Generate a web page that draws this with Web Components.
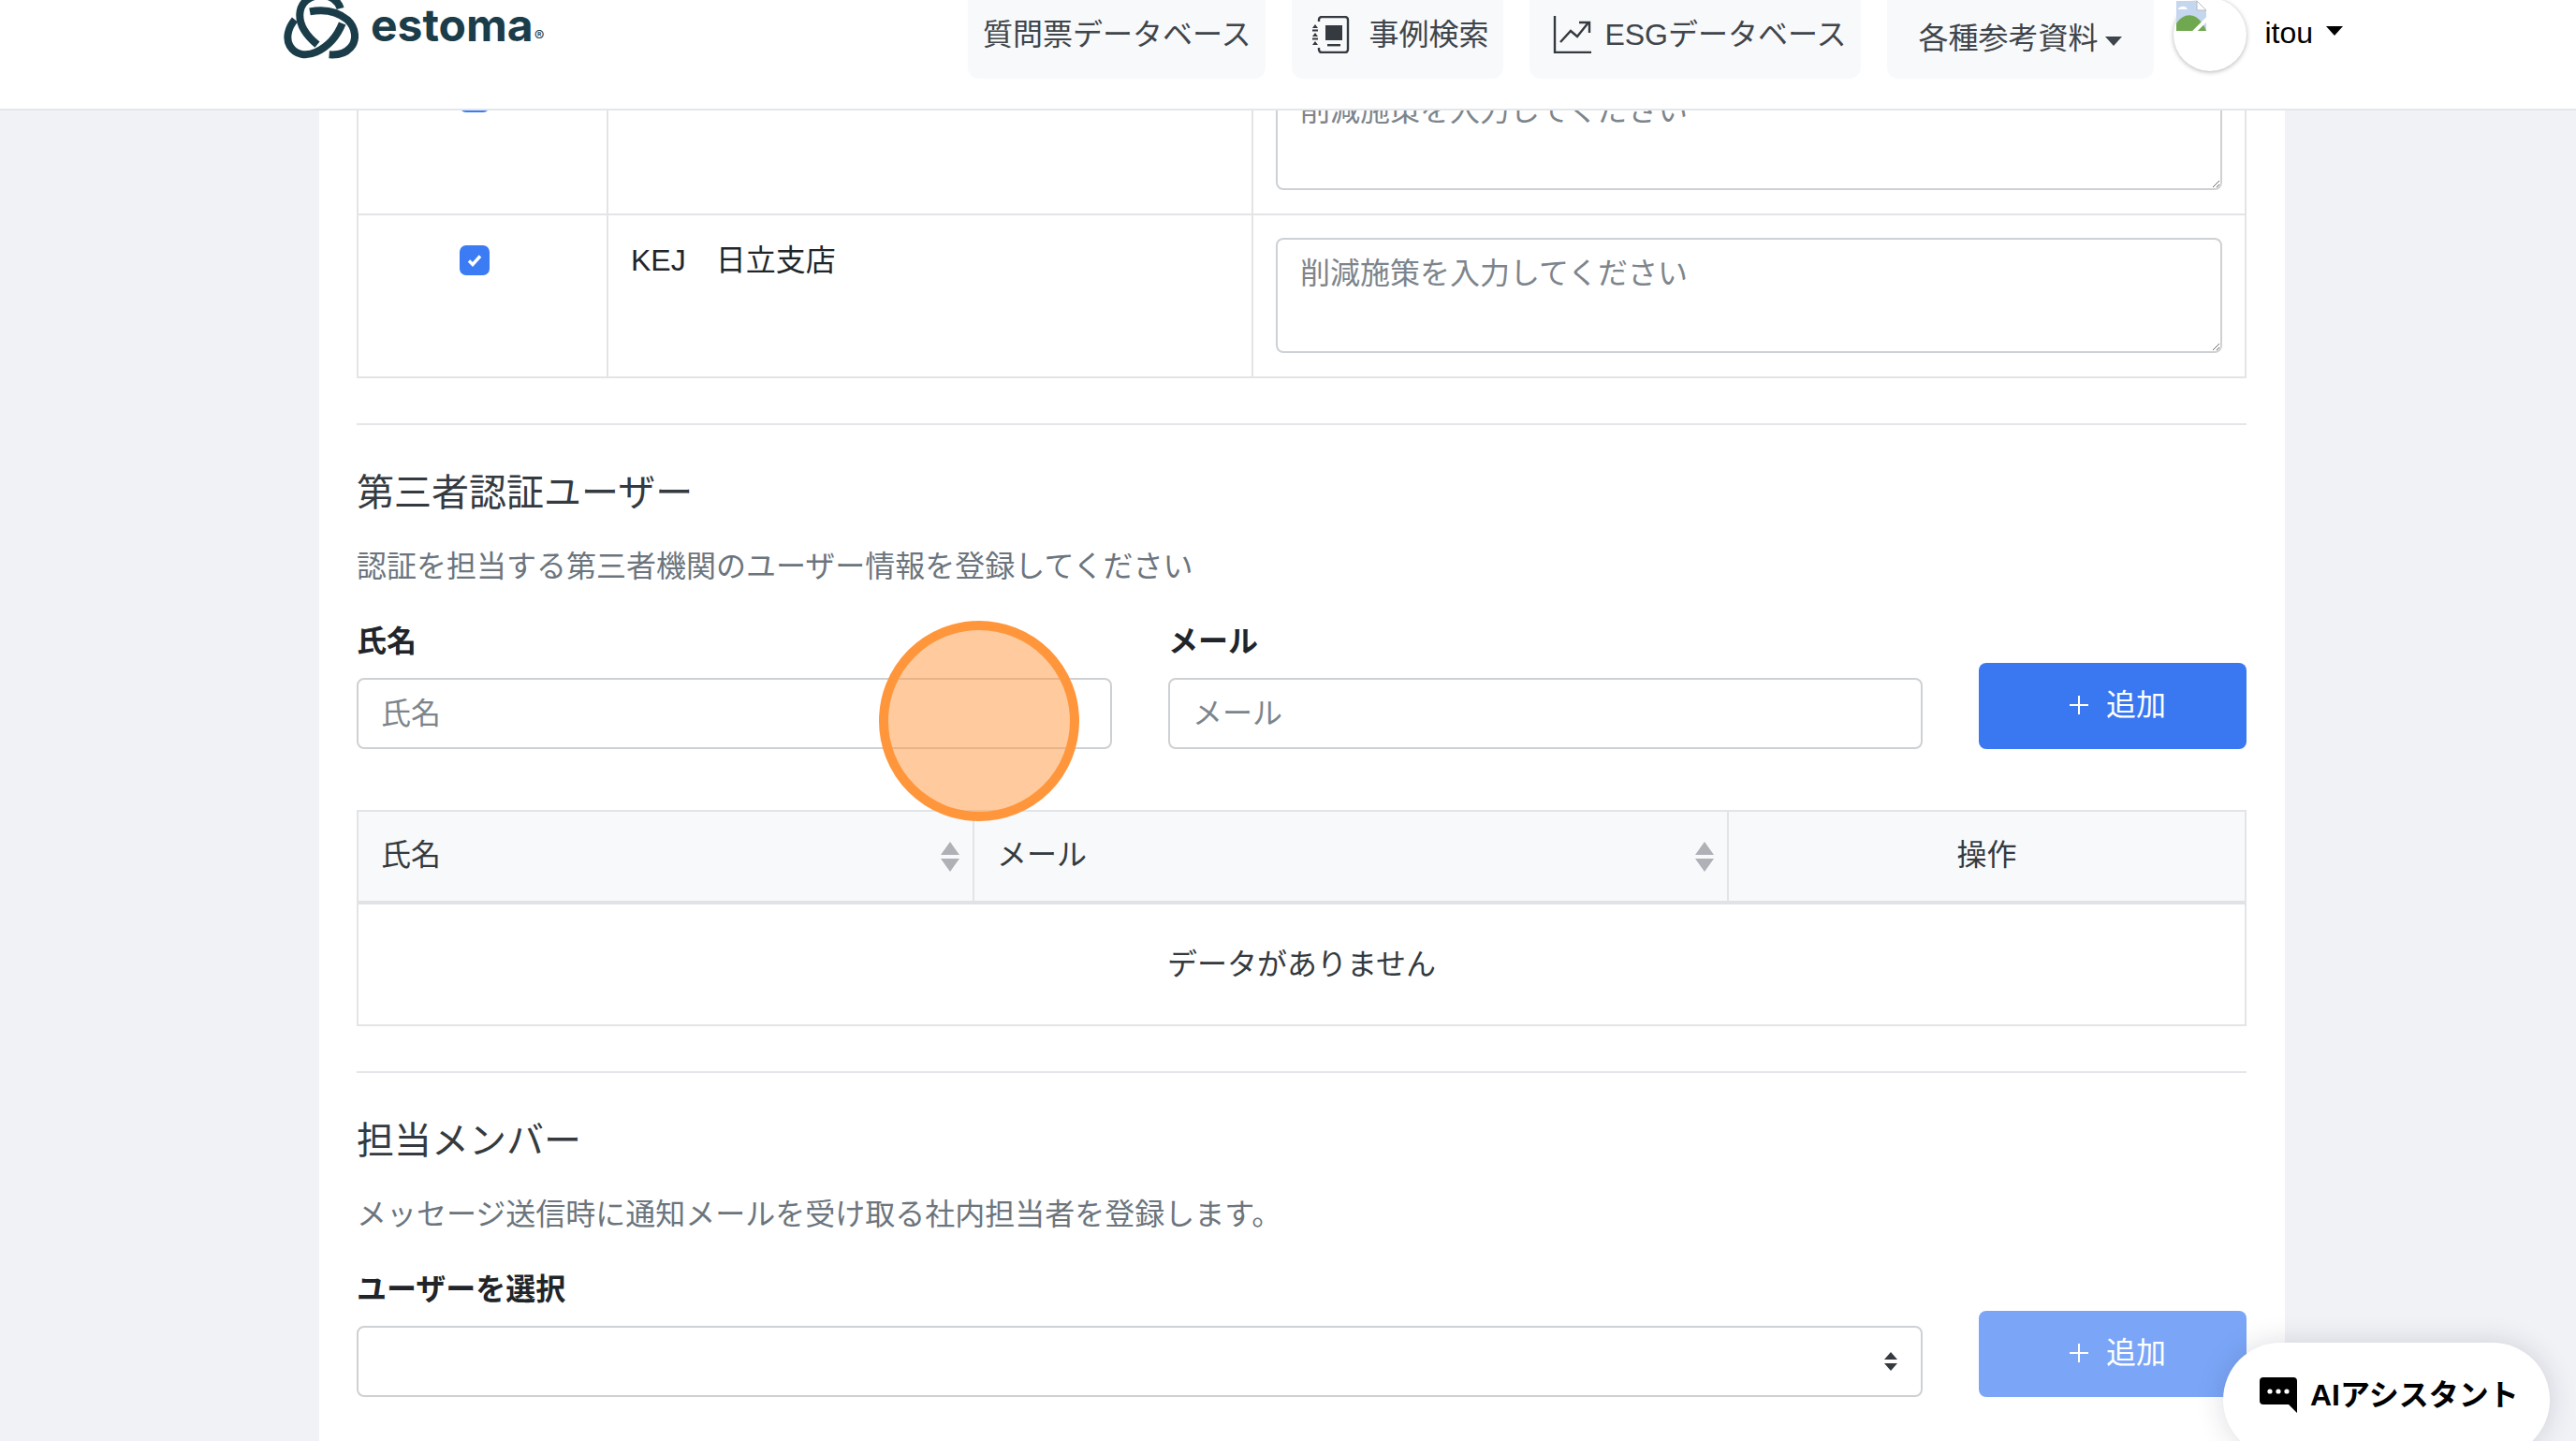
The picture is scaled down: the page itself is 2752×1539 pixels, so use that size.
<!DOCTYPE html>
<html lang="ja">
<head>
<meta charset="utf-8">
<title>estoma</title>
<style>
	html, body { margin: 0; height: 1539px; overflow: hidden; }
	body {
		background: #f1f2f6;
		font-family: "Liberation Sans", "Noto Sans CJK JP", sans-serif;
		font-size: 32px;
		line-height: 48px;
		color: #212529;
		position: relative;
	}
</style>
</head>
<body>
	<app-header>
		<nav-item>質問票データベース</nav-item>
		<nav-item icon="book">事例検索</nav-item>
		<nav-item icon="chart">ESGデータベース</nav-item>
		<nav-item caret low>各種参考資料</nav-item>
		<user-menu>itou</user-menu>
	</app-header>

	<page-card>
		<branch-table>
			<branch-row></branch-row>
			<branch-row>KEJ　日立支店</branch-row>
		</branch-table>

		<settings-section heading="第三者認証ユーザー" desc="認証を担当する第三者機関のユーザー情報を登録してください">
			<form-row>
				<form-field label="氏名" placeholder="氏名"></form-field>
				<form-field label="メール" placeholder="メール"></form-field>
				<add-button></add-button>
			</form-row>
			<user-table></user-table>
		</settings-section>

		<settings-section heading="担当メンバー" desc="メッセージ送信時に通知メールを受け取る社内担当者を登録します。">
			<form-row>
				<form-field label="ユーザーを選択" select></form-field>
				<add-button disabled></add-button>
			</form-row>
		</settings-section>
	</page-card>

	<click-marker></click-marker>
	<chat-pill>AIアシスタント</chat-pill>

<script>
const ICONS = {
	book: `<svg width="48" height="40" viewBox="0 0 48 40" fill="none">
		<path d="M13 6V4a3 3 0 0 1 3-3h25a3 3 0 0 1 3 3v32a3 3 0 0 1-3 3H16a3 3 0 0 1-3-3v-2" stroke="#343a40" stroke-width="2.4"/>
		<rect x="20" y="10" width="18" height="16" fill="#343a40"/>
		<rect x="22" y="30" width="14" height="2.4" fill="#343a40"/>
		<path d="M9 9l3 4H6zM9 18l3 4H6zM9 27l3 4H6z" fill="#343a40"/>
		<rect x="6" y="14.5" width="6" height="2" fill="#343a40"/>
		<rect x="6" y="23.5" width="6" height="2" fill="#343a40"/>
	</svg>`,
	chart: `<svg width="56" height="40" viewBox="0 0 56 40" fill="none" stroke="#343a40" stroke-width="2.4">
		<path d="M11 0v39h39"/>
		<path d="M17 28l11-12 7 6 12-15"/>
		<path d="M37 7h11v11"/>
	</svg>`,
};

class AppHeader extends HTMLElement {
	constructor() {
		super();
		this.attachShadow({ mode: 'open' });
	}

	connectedCallback() {
		this.shadowRoot.innerHTML = /*html*/ `
		<style>
			:host {
				display: flex;
				align-items: flex-end;
				box-sizing: border-box;
				height: 118px;
				padding: 0 0 32px 303px;
				background: #fff;
				border-bottom: 2px solid #e4e6e9;
				overflow: hidden;
				position: relative;
				z-index: 2;
			}
			.logo {
				flex: 0 0 731px;
				display: flex;
				align-items: flex-end;
				margin-bottom: 21px;
				color: #1b3d4a;
			}
			.logo svg { display: block; flex: none; }
			.word {
				font-family: Inter, "Liberation Sans", sans-serif;
				font-weight: 700;
				font-size: 48px;
				line-height: 48px;
				margin: 0 0 12px 13px;
			}
			.word sup {
				font-size: 16px;
				font-weight: 400;
				line-height: 0;
				vertical-align: baseline;
				margin-left: 1px;
			}
			.nav { display: flex; align-items: flex-end; gap: 28px; }
		</style>
		<div class="logo">
			<svg width="80" height="64" viewBox="0 0 240 192" fill="none" stroke="#1b3d4a" stroke-width="24">
				<path d="M108 146C74 118 50 84 52 48C54 12 82 -12 122 -12C152 -12 176 8 182 30"/>
				<path d="M84 40C126 32 170 38 204 66C232 92 236 132 214 156C198 174 172 180 146 178"/>
				<path d="M36 66C14 92 6 126 20 150C38 180 72 184 104 170C142 152 172 118 188 78"/>
			</svg>
			<div class="word">estoma<sup>®</sup></div>
		</div>
		<div class="nav"><slot></slot></div>
		`;
	}
}

class NavItem extends HTMLElement {
	constructor() {
		super();
		this.attachShadow({ mode: 'open' });
	}

	connectedCallback() {
		const icon = this.getAttribute('icon');
		const caret = this.hasAttribute('caret');
		this.shadowRoot.innerHTML = /*html*/ `
		<style>
			:host {
				display: flex;
				align-items: flex-end;
				box-sizing: border-box;
				height: 110px;
				padding: 0 16px 23px;
				background: #f8f9fa;
				border-radius: 0 0 12px 12px;
				color: #3f454b;
				white-space: nowrap;
			}
			:host([low]) { padding: 0 34px 19px 33px; }
			.in { display: flex; align-items: center; height: 48px; }
			:host([icon="book"]) svg { margin-right: 18px; }
			:host([icon="chart"]) svg { margin-right: 8px; }
			.caret {
				display: inline-block;
				width: 0;
				height: 0;
				margin-left: 8px;
				vertical-align: 3px;
				border-top: 10px solid #3f454b;
				border-left: 9.6px solid transparent;
				border-right: 9.6px solid transparent;
			}
			svg { display: block; flex: none; }
		</style>
		<div class="in">${icon ? ICONS[icon] : ''}<span><slot></slot>${caret ? '<span class="caret"></span>' : ''}</span></div>
		`;
	}
}

class UserMenu extends HTMLElement {
	constructor() {
		super();
		this.attachShadow({ mode: 'open' });
	}

	connectedCallback() {
		this.shadowRoot.innerHTML = /*html*/ `
		<style>
			:host {
				display: flex;
				align-items: flex-start;
				margin: 0 0 8px -7px;
				color: #000;
				white-space: nowrap;
			}
			.avatar {
				flex: none;
				width: 78px;
				height: 78px;
				margin-right: 19px;
				border-radius: 50%;
				background: #fff;
				box-shadow: 0 1px 5px rgba(0, 0, 0, 0.3);
				position: relative;
			}
			.avatar svg { position: absolute; left: 3px; top: 3px; }
			.name { margin-top: 13px; }
			.caret {
				display: inline-block;
				width: 0;
				height: 0;
				margin-left: 14px;
				vertical-align: 8px;
				border-top: 10px solid #000;
				border-left: 9px solid transparent;
				border-right: 9px solid transparent;
			}
		</style>
		<div class="avatar">
			<svg width="32" height="32" viewBox="0 0 32 32">
				<path d="M0 0h22l10 10v22H0z" fill="#c5d6ef"/>
				<path d="M22 0l10 10H22z" fill="#fff" stroke="#b5b9c0" stroke-width="1"/>
				<path d="M0 32V24C6 15 15 13 22 18c4 3 8 8 10 14z" fill="#6fa84f"/>
				<path d="M2 8c4-3 8-3 10 1H2z" fill="#fff"/>
				<path d="M16 36L34 18" stroke="#fff" stroke-width="4"/>
			</svg>
		</div>
		<div class="name"><slot></slot><span class="caret"></span></div>
		`;
	}
}

class PageCard extends HTMLElement {
	constructor() {
		super();
		this.attachShadow({ mode: 'open' });
	}

	connectedCallback() {
		this.shadowRoot.innerHTML = /*html*/ `
		<style>
			:host {
				display: block;
				box-sizing: border-box;
				width: 2100px;
				height: 1600px;
				margin: -62px 0 0 341px;
				padding: 0 41px 0 40px;
				background: #fff;
			}
		</style>
		<slot></slot>
		`;
	}
}

class BranchTable extends HTMLElement {
	constructor() {
		super();
		this.attachShadow({ mode: 'open' });
	}

	connectedCallback() {
		this.shadowRoot.innerHTML = /*html*/ `
		<style>
			:host {
				display: block;
				border: solid #e2e4e7;
				border-width: 0 2px 2px;
			}
		</style>
		<slot></slot>
		`;
	}
}

class BranchRow extends HTMLElement {
	constructor() {
		super();
		this.attachShadow({ mode: 'open' });
	}

	connectedCallback() {
		this.shadowRoot.innerHTML = /*html*/ `
		<style>
			:host {
				display: grid;
				grid-template-columns: 265px 689px 1fr;
				border-top: 2px solid #e2e4e7;
			}
			:host(:first-child) { border-top: 0; }
			.cell { box-sizing: border-box; height: 172px; padding: 24px; }
			.cell + .cell { border-left: 2px solid #e2e4e7; }
			.check { padding: 32px 0 0 108px; }
			.box {
				width: 32px;
				height: 32px;
				border-radius: 7px;
				background: #3b7bf4;
				display: flex;
				align-items: center;
				justify-content: center;
			}
			textarea {
				display: block;
				box-sizing: border-box;
				width: 100%;
				height: 123px;
				margin: 0;
				padding: 12px 24px;
				border: 2px solid #ced1d4;
				border-radius: 8px;
				background: #fff;
				color: #212529;
				font: inherit;
				line-height: 48px;
				outline: none;
			}
			textarea::placeholder { color: #7d858c; opacity: 1; }
		</style>
		<div class="cell check">
			<div class="box">
				<svg width="18" height="18" viewBox="0 0 18 18" fill="none" stroke="#fff" stroke-width="3.4"><path d="M3 9.5l4 4 8-9"/></svg>
			</div>
		</div>
		<div class="cell"><slot></slot></div>
		<div class="cell"><textarea placeholder="削減施策を入力してください"></textarea></div>
		`;
	}
}

class SettingsSection extends HTMLElement {
	constructor() {
		super();
		this.attachShadow({ mode: 'open' });
	}

	connectedCallback() {
		this.shadowRoot.innerHTML = /*html*/ `
		<style>
			:host { display: block; margin-top: 48px; }
			hr { margin: 0 0 48px; border: 0; border-top: 2px solid #e4e6e9; }
			h2 {
				margin: 0 0 31px;
				font-size: 40px;
				line-height: 48px;
				font-weight: 400;
				color: #343a40;
			}
			p { margin: 0 0 32px; color: #6c757d; }
		</style>
		<hr>
		<h2>${this.getAttribute('heading')}</h2>
		<p>${this.getAttribute('desc')}</p>
		<slot></slot>
		`;
	}
}

class FormRow extends HTMLElement {
	constructor() {
		super();
		this.attachShadow({ mode: 'open' });
	}

	connectedCallback() {
		this.shadowRoot.innerHTML = /*html*/ `
		<style>
			:host {
				display: grid;
				grid-template-columns: 807px 806px 286px;
				gap: 60px;
				align-items: end;
			}
		</style>
		<slot></slot>
		`;
	}
}

class FormField extends HTMLElement {
	constructor() {
		super();
		this.attachShadow({ mode: 'open' });
	}

	connectedCallback() {
		const isSelect = this.hasAttribute('select');
		this.shadowRoot.innerHTML = /*html*/ `
		<style>
			:host { display: block; }
			:host([select]) { grid-column: span 2; }
			label { display: block; margin-bottom: 15px; font-weight: 700; }
			input, .select {
				display: block;
				box-sizing: border-box;
				width: 100%;
				height: 76px;
				margin: 0;
				padding: 0 24px;
				border: 2px solid #ced1d4;
				border-radius: 8px;
				background: #fff;
				color: #212529;
				font: inherit;
				outline: none;
			}
			input::placeholder { color: #7d858c; opacity: 1; }
			.select {
				display: flex;
				align-items: center;
				justify-content: flex-end;
			}
		</style>
		<label>${this.getAttribute('label')}</label>
		${isSelect
			? `<div class="select"><svg width="16" height="20" viewBox="0 0 16 20" fill="#343a40"><path d="M8 0l7 8H1zM8 20l7-8H1z"/></svg></div>`
			: `<input type="text" placeholder="${this.getAttribute('placeholder')}">`}
		`;
	}
}

class AddButton extends HTMLElement {
	constructor() {
		super();
		this.attachShadow({ mode: 'open' });
	}

	connectedCallback() {
		this.shadowRoot.innerHTML = /*html*/ `
		<style>
			:host {
				display: flex;
				align-items: center;
				justify-content: center;
				gap: 18px;
				height: 92px;
				padding: 0 0 2px 10px;
				box-sizing: border-box;
				border-radius: 8px;
				background: #3a78f2;
				color: #fff;
			}
			:host([disabled]) { background: #7ba6f7; }
			svg { display: block; }
		</style>
		<svg width="22" height="22" viewBox="0 0 22 22" stroke="#fff" stroke-width="2"><path d="M11 1v20M1 11h20"/></svg>
		<span>追加</span>
		`;
	}
}

class UserTable extends HTMLElement {
	constructor() {
		super();
		this.attachShadow({ mode: 'open' });
	}

	connectedCallback() {
		const sort = `<svg class="sort" width="20" height="32" viewBox="0 0 20 32" fill="#aeb1b5"><path d="M10 0l10 14H0zM10 32L0 18h20z"/></svg>`;
		this.shadowRoot.innerHTML = /*html*/ `
		<style>
			:host {
				display: block;
				margin: 65px 0 0;
				border: 2px solid #e2e4e7;
				color: #343a40;
			}
			.head {
				display: grid;
				grid-template-columns: 656px 806px 1fr;
				background: #f8f9fa;
				border-bottom: 4px solid #e0e2e6;
			}
			.th {
				display: flex;
				align-items: center;
				justify-content: space-between;
				box-sizing: border-box;
				height: 95px;
				padding: 0 24px;
			}
			.th span { position: relative; top: -2px; }
			.th + .th { border-left: 2px solid #e2e4e7; }
			.th:nth-child(-n+2) { padding-right: 14px; }
			.th:last-child { justify-content: center; }
			.empty {
				height: 128px;
				line-height: 129px;
				text-align: center;
			}
			.sort { display: block; flex: none; }
		</style>
		<div class="head">
			<div class="th"><span>氏名</span>${sort}</div>
			<div class="th"><span>メール</span>${sort}</div>
			<div class="th"><span>操作</span></div>
		</div>
		<div class="empty">データがありません</div>
		`;
	}
}

class ClickMarker extends HTMLElement {
	constructor() {
		super();
		this.attachShadow({ mode: 'open' });
	}

	connectedCallback() {
		this.shadowRoot.innerHTML = /*html*/ `
		<style>
			:host {
				position: absolute;
				left: 939px;
				top: 663px;
				box-sizing: border-box;
				width: 214px;
				height: 214px;
				border: 10px solid #ff963c;
				border-radius: 50%;
				background: rgba(255, 150, 60, 0.5);
				z-index: 3;
			}
		</style>
		`;
	}
}

class ChatPill extends HTMLElement {
	constructor() {
		super();
		this.attachShadow({ mode: 'open' });
	}

	connectedCallback() {
		this.shadowRoot.innerHTML = /*html*/ `
		<style>
			:host {
				position: absolute;
				left: 2375px;
				top: 1434px;
				box-sizing: border-box;
				width: 349px;
				height: 122px;
				padding: 0 0 10px 39px;
				display: flex;
				align-items: center;
				gap: 14px;
				background: #fff;
				border-radius: 61px;
				box-shadow: 0 0 30px rgba(30, 40, 60, 0.16);
				color: #000;
				font-weight: 700;
				white-space: nowrap;
				z-index: 3;
			}
			svg { display: block; flex: none; }
		</style>
		<svg width="40" height="38" viewBox="0 0 40 38">
			<path d="M4 0h32a4 4 0 0 1 4 4v34l-9-9H4a4 4 0 0 1-4-4V4a4 4 0 0 1 4-4z" fill="#000"/>
			<circle cx="11" cy="15" r="2.6" fill="#fff"/><circle cx="20" cy="15" r="2.6" fill="#fff"/><circle cx="29" cy="15" r="2.6" fill="#fff"/>
		</svg>
		<span><slot></slot></span>
		`;
	}
}

customElements.define('app-header', AppHeader);
customElements.define('nav-item', NavItem);
customElements.define('user-menu', UserMenu);
customElements.define('page-card', PageCard);
customElements.define('branch-table', BranchTable);
customElements.define('branch-row', BranchRow);
customElements.define('settings-section', SettingsSection);
customElements.define('form-row', FormRow);
customElements.define('form-field', FormField);
customElements.define('add-button', AddButton);
customElements.define('user-table', UserTable);
customElements.define('click-marker', ClickMarker);
customElements.define('chat-pill', ChatPill);
</script>
</body>
</html>
